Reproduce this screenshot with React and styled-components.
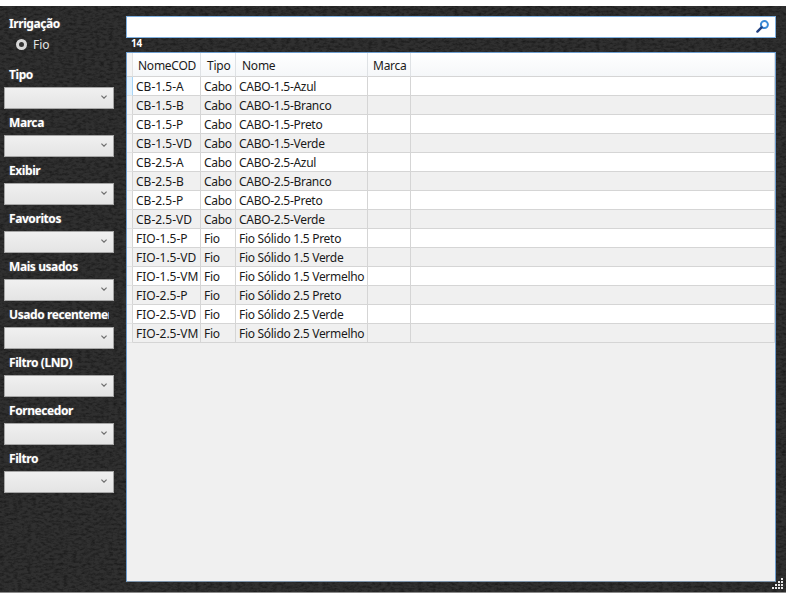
import React from 'react';
import styled, { createGlobalStyle } from 'styled-components';

const texture = `url("data:image/svg+xml,%3Csvg xmlns='http://www.w3.org/2000/svg' width='786' height='593'%3E%3Cfilter id='n'%3E%3CfeTurbulence type='fractalNoise' baseFrequency='0.22 0.4' numOctaves='4' seed='11'/%3E%3CfeColorMatrix values='0 0 0 0 0 0 0 0 0 0 0 0 0 0 0 1.6 0 0 0 -0.62'/%3E%3C/filter%3E%3Crect width='786' height='593' filter='url(%23n)' opacity='0.55'/%3E%3C/svg%3E")`;

const GlobalStyle = createGlobalStyle`
  html, body {
    margin: 0;
    padding: 0;
    background: #fff;
  }
  * {
    box-sizing: border-box;
  }
`;

const Page = styled.div`
  width: 786px;
  height: 593px;
  padding-top: 6px;
  background: #fff;
  font-family: "Noto Sans", "Open Sans", sans-serif;
`;

const Shell = styled.div`
  position: relative;
  display: flex;
  height: 587px;
  background-color: #303030;
  background-image: ${texture};
  border-bottom: 1px solid #8c8c8c;
`;

const Sidebar = styled.aside`
  width: 126px;
  flex: none;
  padding-top: 10px;
`;

const Label = styled.div`
  height: 16px;
  padding-left: 9px;
  width: 109px;
  overflow: hidden;
  white-space: nowrap;
  font-size: 12px;
  line-height: 16px;
  font-weight: 700;
  letter-spacing: -0.42px;
  color: #fff;
  text-shadow: 0 0 2px rgba(255, 255, 255, 0.3);
`;

const RadioRow = styled.div`
  display: flex;
  align-items: center;
  gap: 6px;
  height: 16px;
  margin: 4px 0 15px 16px;
  font-size: 12px;
  color: #e4e4e4;
`;

const RadioDot = styled.span`
  width: 11px;
  height: 11px;
  border-radius: 50%;
  border: 3px solid #d8d8d8;
  background: #333;
`;

const Field = styled.div`
  margin-bottom: 6px;
`;

const Combo = styled.div`
  display: flex;
  align-items: center;
  justify-content: flex-end;
  width: 110px;
  height: 22px;
  margin: 4px 0 0 4px;
  padding: 0 6px 2px 0;
  background: linear-gradient(#f0f0f0, #e4e4e4);
  border: 1px solid #a6a6a6;
`;

const Main = styled.main`
  flex: 1;
  display: flex;
  flex-direction: column;
  padding: 10px 10px 10px 0;
`;

const Search = styled.div`
  display: flex;
  align-items: center;
  justify-content: flex-end;
  height: 22px;
  padding: 0 6px 2px 0;
  background: #fff;
  border: 1px solid #7fb0e0;
`;

const Count = styled.div`
  height: 14px;
  padding-left: 5px;
  font-size: 10px;
  line-height: 11px;
  font-weight: 700;
  letter-spacing: -0.2px;
  color: #fff;
`;

const GridPanel = styled.div`
  flex: 1;
  background: #f0f0f0;
  border: 1px solid #6f9fd0;
  border-bottom-color: #7d93aa;
`;

const Table = styled.table`
  width: 100%;
  table-layout: fixed;
  border-collapse: separate;
  border-spacing: 0;
  font-size: 12px;
  color: #1a1a1a;
`;

const Head = styled.th`
  height: 24px;
  padding: 2px 0 0 ${(p) => p.$pad || 5}px;
  text-align: left;
  font-weight: 400;
  letter-spacing: -0.25px;
  white-space: nowrap;
  overflow: hidden;
  background: linear-gradient(#fff, #f5f7f9);
  border-right: 1px solid #dfe2e5;
  border-bottom: 1px solid #d5d5d5;
`;

const Corner = styled.th`
  background: #f4f4f4;
  border-right: 1px solid #e2e2e2;
  border-bottom: 1px solid #d5d5d5;
`;

const Cell = styled.td`
  height: 19px;
  padding: 0 0 0 3px;
  white-space: nowrap;
  overflow: hidden;
  letter-spacing: ${(p) => (p.$tight ? '-0.29px' : '0')};
  background: ${(p) => (p.$odd ? '#f0f0f0' : '#fff')};
  border-right: 1px solid #d5d5d5;
  border-bottom: 1px solid #d5d5d5;
`;

const RowMark = styled.td`
  background: ${(p) => (p.$current ? '#e4f2fc' : '#f4f4f4')};
  border-right: 1px solid ${(p) => (p.$current ? '#a8d4f5' : '#d5d5d5')};
  border-bottom: 1px solid #e2e2e2;
`;

const Grip = styled.svg`
  position: absolute;
  right: 2px;
  bottom: 2px;
`;

const filters = [
  'Tipo',
  'Marca',
  'Exibir',
  'Favoritos',
  'Mais usados',
  'Usado recentemente',
  'Filtro (LND)',
  'Fornecedor',
  'Filtro',
];

const rows = [
  ['CB-1.5-A', 'Cabo', 'CABO-1.5-Azul'],
  ['CB-1.5-B', 'Cabo', 'CABO-1.5-Branco'],
  ['CB-1.5-P', 'Cabo', 'CABO-1.5-Preto'],
  ['CB-1.5-VD', 'Cabo', 'CABO-1.5-Verde'],
  ['CB-2.5-A', 'Cabo', 'CABO-2.5-Azul'],
  ['CB-2.5-B', 'Cabo', 'CABO-2.5-Branco'],
  ['CB-2.5-P', 'Cabo', 'CABO-2.5-Preto'],
  ['CB-2.5-VD', 'Cabo', 'CABO-2.5-Verde'],
  ['FIO-1.5-P', 'Fio', 'Fio Sólido 1.5 Preto'],
  ['FIO-1.5-VD', 'Fio', 'Fio Sólido 1.5 Verde'],
  ['FIO-1.5-VM', 'Fio', 'Fio Sólido 1.5 Vermelho'],
  ['FIO-2.5-P', 'Fio', 'Fio Sólido 2.5 Preto'],
  ['FIO-2.5-VD', 'Fio', 'Fio Sólido 2.5 Verde'],
  ['FIO-2.5-VM', 'Fio', 'Fio Sólido 2.5 Vermelho'],
];

const Chevron = () => (
  <svg width="6" height="4" viewBox="0 0 6 4">
    <path d="M0.4 0.6 L3 3.2 L5.6 0.6" fill="none" stroke="#707070" strokeWidth="1.2" />
  </svg>
);

const SearchIcon = () => (
  <svg width="13" height="13" viewBox="0 0 13 13">
    <circle cx="8.4" cy="4.6" r="3.5" fill="#fff" stroke="#3a8ad6" strokeWidth="2" />
    <path d="M5.6 7.4 L1.4 11.6" stroke="#1f3f80" strokeWidth="2.4" strokeLinecap="round" />
  </svg>
);

const gripDots = [[9, 0], [6, 3], [9, 3], [3, 6], [6, 6], [9, 6], [0, 9], [3, 9], [6, 9], [9, 9]];

const App = () => {
  return (
    <Page>
      <GlobalStyle />
      <Shell>
        <Sidebar>
          <Label>Irrigação</Label>
          <RadioRow>
            <RadioDot />
            Fio
          </RadioRow>
          {filters.map((name) => (
            <Field key={name}>
              <Label>{name}</Label>
              <Combo>
                <Chevron />
              </Combo>
            </Field>
          ))}
        </Sidebar>
        <Main>
          <Search>
            <SearchIcon />
          </Search>
          <Count>14</Count>
          <GridPanel>
            <Table>
              <colgroup>
                <col width="6" />
                <col width="68" />
                <col width="35" />
                <col width="132" />
                <col width="43" />
                <col />
              </colgroup>
              <thead>
                <tr>
                  <Corner />
                  <Head>NomeCOD</Head>
                  <Head $pad={6}>Tipo</Head>
                  <Head $pad={6}>Nome</Head>
                  <Head>Marca</Head>
                  <Head />
                </tr>
              </thead>
              <tbody>
                {rows.map((row, i) => (
                  <tr key={row[0]}>
                    <RowMark $current={i === 0} />
                    <Cell $odd={i % 2 === 1}>{row[0]}</Cell>
                    <Cell $odd={i % 2 === 1} $tight>{row[1]}</Cell>
                    <Cell $odd={i % 2 === 1} $tight>{row[2]}</Cell>
                    <Cell $odd={i % 2 === 1} />
                    <Cell $odd={i % 2 === 1} />
                  </tr>
                ))}
              </tbody>
            </Table>
          </GridPanel>
        </Main>
        <Grip width="12" height="12" viewBox="0 0 12 12">
          {gripDots.map(([x, y]) => (
            <rect key={`${x}-${y}`} x={x} y={y} width="2" height="2" fill="#e8e8e8" />
          ))}
        </Grip>
      </Shell>
    </Page>
  );
};

export default App;
